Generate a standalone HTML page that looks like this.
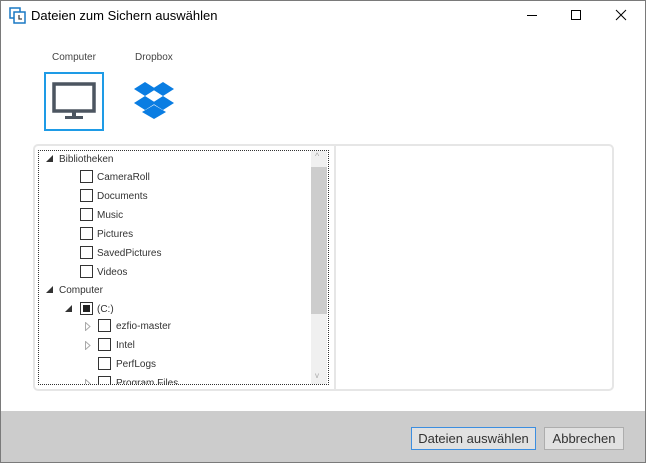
<!DOCTYPE html>
<html><head><style>
*{margin:0;padding:0;box-sizing:border-box}
body{width:646px;height:463px;background:#fff;font-family:"Liberation Sans",sans-serif;position:relative;overflow:hidden}
.win{position:absolute;left:0;top:0;width:646px;height:463px;border:1px solid #7a7a7a}
.t{position:absolute;font-size:10px;color:#333;white-space:nowrap}
.cb{position:absolute;width:13px;height:13px;border:1px solid #333;background:#fff}
</style></head><body>
<div class="win"></div>
<svg style="position:absolute;left:9px;top:7px" width="18" height="18" viewBox="0 0 18 18">
<rect x="1" y="1" width="10" height="10" fill="none" stroke="#1a79c4" stroke-width="1.5"/>
<rect x="5" y="5" width="11" height="11" fill="#fff" stroke="#1a79c4" stroke-width="1.5"/>
<path d="M10 8v4h3" stroke="#444" stroke-width="1.3" fill="none"/>
</svg>
<div style="position:absolute;left:31px;top:8px;font-size:13px;color:#000">Dateien zum Sichern auswählen</div>
<div style="position:absolute;left:527px;top:15px;width:10px;height:1px;background:#000"></div>
<div style="position:absolute;left:571px;top:10px;width:10px;height:10px;border:1px solid #000"></div>
<svg style="position:absolute;left:615px;top:9px" width="12" height="12"><path d="M1 1L11 11M11 1L1 11" stroke="#000" stroke-width="1"/></svg>
<div class="t" style="left:52px;top:52px;color:#444">Computer</div>
<div class="t" style="left:135px;top:52px;color:#444">Dropbox</div>
<div style="position:absolute;left:44px;top:72px;width:60px;height:59px;border:2px solid #1e9be6"></div>
<svg style="position:absolute;left:52px;top:82px" width="44" height="40"><rect x="2" y="2" width="40" height="27" fill="none" stroke="#4c5560" stroke-width="3.5"/><rect x="20" y="29" width="4" height="6" fill="#4c5560"/><rect x="13" y="34" width="18" height="3" fill="#4c5560"/></svg>
<svg style="position:absolute;left:133px;top:82px" width="42" height="38" viewBox="0 0 42 38">
<g fill="#0a7de2">
<path d="M12 0L1 7l11 7 11-7z"/><path d="M30 0L19 7l11 7 11-7z"/>
<path d="M1 21l11 7 11-7-11-7z"/><path d="M19 21l11 7 11-7-11-7z"/>
<path d="M9 30l12 7 12-7-12-7z"/>
</g></svg>
<div style="position:absolute;left:33px;top:144px;width:581px;height:247px;border:2px solid #e6e6e6;border-radius:5px"></div>
<div style="position:absolute;left:334px;top:146px;width:2px;height:243px;background:#e6e6e6"></div>
<div style="position:absolute;left:38px;top:150px;width:291px;height:235px;border:1px dotted #333"></div>
<div style="position:absolute;left:311px;top:151px;width:16px;height:233px;background:#f0f0f0"></div>
<div style="position:absolute;left:311px;top:167px;width:16px;height:147px;background:#cdcdcd"></div>
<div class="t" style="left:315px;top:151px;color:#aaa;font-size:9px">&#94;</div>
<div class="t" style="left:315px;top:371px;color:#aaa;font-size:8px">v</div>
<div style="position:absolute;left:39px;top:151px;width:272px;height:233px;overflow:hidden">
<svg style="position:absolute;left:7px;top:4px" width="7" height="7"><path d="M7 0V7H0z" fill="#333"/></svg>
<div class="t" style="left:20px;top:3px">Bibliotheken</div>
<div class="cb" style="left:41px;top:19px"></div><div class="t" style="left:58px;top:21px">CameraRoll</div>
<div class="cb" style="left:41px;top:38px"></div><div class="t" style="left:58px;top:40px">Documents</div>
<div class="cb" style="left:41px;top:57px"></div><div class="t" style="left:58px;top:59px">Music</div>
<div class="cb" style="left:41px;top:76px"></div><div class="t" style="left:58px;top:78px">Pictures</div>
<div class="cb" style="left:41px;top:95px"></div><div class="t" style="left:58px;top:97px">SavedPictures</div>
<div class="cb" style="left:41px;top:114px"></div><div class="t" style="left:58px;top:116px">Videos</div>
<svg style="position:absolute;left:7px;top:135px" width="7" height="7"><path d="M7 0V7H0z" fill="#333"/></svg>
<div class="t" style="left:20px;top:134px">Computer</div>
<svg style="position:absolute;left:26px;top:154px" width="7" height="7"><path d="M7 0V7H0z" fill="#333"/></svg>
<div class="cb" style="left:41px;top:151px"><div style="position:absolute;left:2px;top:2px;width:7px;height:7px;background:#222"></div></div>
<div class="t" style="left:58px;top:153px">(C:)</div>
<svg style="position:absolute;left:46px;top:171px" width="6" height="9"><path d="M.5 .5L5 4.5L.5 8.5z" fill="none" stroke="#aaa"/></svg>
<div class="cb" style="left:59px;top:168px"></div><div class="t" style="left:77px;top:170px">ezfio-master</div>
<svg style="position:absolute;left:46px;top:190px" width="6" height="9"><path d="M.5 .5L5 4.5L.5 8.5z" fill="none" stroke="#aaa"/></svg>
<div class="cb" style="left:59px;top:187px"></div><div class="t" style="left:77px;top:189px">Intel</div>
<div class="cb" style="left:59px;top:206px"></div><div class="t" style="left:77px;top:208px">PerfLogs</div>
<svg style="position:absolute;left:46px;top:228px" width="6" height="9"><path d="M.5 .5L5 4.5L.5 8.5z" fill="none" stroke="#aaa"/></svg>
<div class="cb" style="left:59px;top:225px"></div><div class="t" style="left:77px;top:227px">Program Files</div>
</div>
<div style="position:absolute;left:1px;top:411px;width:644px;height:51px;background:#cccccc"></div>
<div style="position:absolute;left:411px;top:427px;width:125px;height:23px;border:1px solid #3c8ee0;background:#e1e1e1;font-size:13px;color:#333;text-align:center;line-height:21px">Dateien auswählen</div>
<div style="position:absolute;left:544px;top:427px;width:80px;height:23px;border:1px solid #adadad;background:#e1e1e1;font-size:13px;color:#333;text-align:center;line-height:21px">Abbrechen</div>
</body></html>
